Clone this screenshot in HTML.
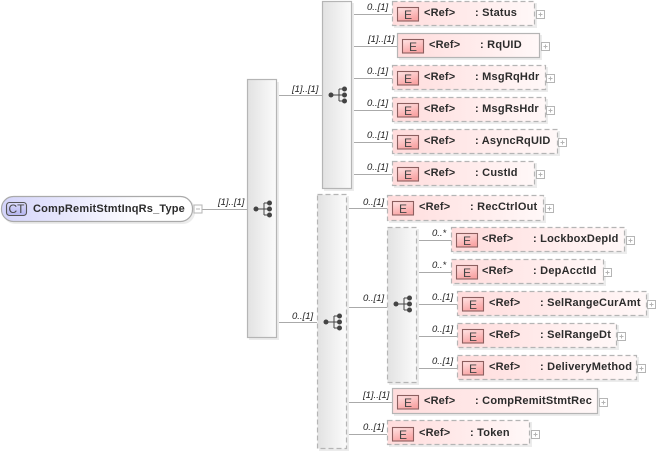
<!DOCTYPE html>
<html>
<head>
<meta charset="utf-8">
<style>
html,body{margin:0;padding:0;background:#fff;width:657px;height:455px;overflow:hidden}
svg{display:block;font-family:"Liberation Sans",sans-serif;filter:blur(.3px)}
.n{font-size:11px;font-weight:bold;fill:#2c2c2c;letter-spacing:.22px}
.r{font-size:11px;font-weight:bold;fill:#2c2c2c;letter-spacing:.15px}
.m{font-size:9.5px;font-style:italic;fill:#222}
.e{font-size:12px;fill:#444;text-anchor:middle}
.l{stroke:#aaa;stroke-width:1;fill:none}
.bs{stroke:#b5b5b5;stroke-width:1.2;fill:url(#pk)}
.bd{stroke:#b5b5b5;stroke-width:1.2;stroke-dasharray:5 3;fill:url(#pk)}
.ss{stroke:#b5b5b5;stroke-width:1.2;fill:url(#gr)}
.sd{stroke:#b5b5b5;stroke-width:1.2;stroke-dasharray:5 3;fill:url(#gr)}
.sh{fill:#ececec}
</style>
</head>
<body>
<svg width="657" height="455" viewBox="0 0 657 455" xmlns="http://www.w3.org/2000/svg">
<defs>
<linearGradient id="pk" x1="0" x2="1" y1="0" y2="0"><stop offset="0" stop-color="#ffdcdc"/><stop offset="1" stop-color="#fff8f8"/></linearGradient>
<linearGradient id="gr" x1="0" x2="1" y1="0" y2="0"><stop offset="0" stop-color="#e2e2e2"/><stop offset="1" stop-color="#fbfbfb"/></linearGradient>
<linearGradient id="ct" x1="0" x2="1" y1="0" y2="0"><stop offset="0" stop-color="#d4d4fa"/><stop offset=".75" stop-color="#ffffff"/></linearGradient>
<linearGradient id="ei" x1="0" x2=".4" y1="0" y2="1"><stop offset="0" stop-color="#ffe4e4"/><stop offset="1" stop-color="#f9a5a5"/></linearGradient>
<linearGradient id="ci" x1="0" x2="0" y1="0" y2="1"><stop offset="0" stop-color="#dcdcfb"/><stop offset="1" stop-color="#b4b4ee"/></linearGradient>
<g id="seq">
<path d="M-8 0H0M0-6V6M0-6H5M0 0H5M0 6H5" stroke="#444" stroke-width="1" fill="none"/>
<circle cx="-8" cy="0" r="2.5" fill="#444"/><circle cx="5.5" cy="-6" r="2.5" fill="#444"/><circle cx="5.5" cy="0" r="2.5" fill="#444"/><circle cx="5.5" cy="6" r="2.5" fill="#444"/>
</g>
<g id="pl"><rect x=".5" y=".5" width="8" height="8" fill="#fff" stroke="#b5b5b5"/><path d="M2.500 4.500H6.500M4.500 2.500V6.500" stroke="#b5b5b5"/></g>
<g id="ic"><rect x=".5" y=".5" width="21" height="13.500" fill="url(#ei)" stroke="#8c5f5f" stroke-width="1.1"/><text class="e" x="11" y="12">E</text></g>
</defs>

<!-- connectors -->
<path class="l" d="M202 209.5H247M277 95.5H322M277 322.5H317M352 14.5H392M352 46.5H397M352 78.5H392M352 110.5H392M352 142.5H392M352 174.5H392M347 208.5H387M347 307.5H387M347 402.5H392M347 434.5H387M417 240.5H451M417 272.5H451M417 304.5H457M417 336.5H457M417 368.5H457"/>

<!-- root -->
<rect class="sh" x="3" y="198" width="192" height="26" rx="12"/>
<rect x="1.5" y="196.5" width="191" height="25" rx="12" fill="url(#ct)" stroke="#aaa" stroke-width="1.2"/>
<rect x="6.5" y="202.5" width="20" height="13" rx="3" fill="url(#ci)" stroke="#555" stroke-width="1.1"/>
<text x="16.500" y="213" font-size="12" fill="#444" text-anchor="middle">CT</text>
<text class="n" x="33" y="212" textLength="152" lengthAdjust="spacing">CompRemitStmtInqRs_Type</text>
<g transform="translate(193.500 204.500)"><rect x=".5" y=".5" width="8" height="8" fill="#fff" stroke="#b5b5b5"/><path d="M2.500 4.500H6.500" stroke="#b5b5b5"/></g>

<!-- sequence compositors -->
<rect class="sh" x="249" y="82" width="30" height="258"/>
<rect class="ss" x="247.500" y="79.500" width="29" height="258"/>
<use href="#seq" x="264" y="209"/>
<rect class="sh" x="324" y="3" width="30" height="188"/>
<rect class="ss" x="322.500" y="1.500" width="29" height="187"/>
<use href="#seq" x="339" y="95"/>
<rect class="sh" x="319" y="196" width="30" height="255"/>
<rect class="sd" x="317.500" y="194.500" width="29" height="254"/>
<use href="#seq" x="334" y="322"/>
<rect class="sh" x="389" y="229" width="30" height="156"/>
<rect class="sd" x="387.500" y="227.500" width="29" height="155"/>
<use href="#seq" x="404" y="304"/>

<!-- elements -->
<rect class="sh" x="394" y="3" width="143" height="25"/><rect class="bd" x="392.500" y="1.500" width="142" height="24"/><use href="#ic" x="397" y="7"/><text class="r" x="424" y="16">&lt;Ref&gt;</text><text class="n" x="475" y="16">: Status</text><use href="#pl" x="536" y="10"/>
<rect class="sh" x="399" y="35" width="143" height="25"/><rect class="bs" x="397.500" y="33.500" width="142" height="24"/><use href="#ic" x="402" y="39"/><text class="r" x="429" y="48">&lt;Ref&gt;</text><text class="n" x="480" y="48">: RqUID</text><use href="#pl" x="541" y="42"/>
<rect class="sh" x="394" y="67" width="154" height="25"/><rect class="bd" x="392.500" y="65.500" width="153" height="24"/><use href="#ic" x="397" y="71"/><text class="r" x="424" y="80">&lt;Ref&gt;</text><text class="n" x="475" y="80">: MsgRqHdr</text><use href="#pl" x="546" y="74"/>
<rect class="sh" x="394" y="99" width="154" height="25"/><rect class="bd" x="392.500" y="97.500" width="153" height="24"/><use href="#ic" x="397" y="103"/><text class="r" x="424" y="112">&lt;Ref&gt;</text><text class="n" x="475" y="112">: MsgRsHdr</text><use href="#pl" x="546" y="106"/>
<rect class="sh" x="394" y="131" width="166" height="25"/><rect class="bd" x="392.500" y="129.500" width="165" height="24"/><use href="#ic" x="397" y="135"/><text class="r" x="424" y="144">&lt;Ref&gt;</text><text class="n" x="475" y="144">: AsyncRqUID</text><use href="#pl" x="558" y="138"/>
<rect class="sh" x="394" y="163" width="143" height="25"/><rect class="bd" x="392.500" y="161.500" width="142" height="24"/><use href="#ic" x="397" y="167"/><text class="r" x="424" y="176">&lt;Ref&gt;</text><text class="n" x="475" y="176">: CustId</text><use href="#pl" x="536" y="170"/>

<rect class="sh" x="389" y="197" width="157" height="26"/><rect class="bd" x="387.500" y="195.500" width="156" height="25"/><use href="#ic" x="392" y="201"/><text class="r" x="419" y="210">&lt;Ref&gt;</text><text class="n" x="470" y="210">: RecCtrlOut</text><use href="#pl" x="545" y="204"/>
<rect class="sh" x="453" y="229" width="174" height="25"/><rect class="bd" x="451.500" y="227.500" width="173" height="24"/><use href="#ic" x="456" y="233"/><text class="r" x="482" y="242">&lt;Ref&gt;</text><text class="n" x="533" y="242">: LockboxDepId</text><use href="#pl" x="626" y="236"/>
<rect class="sh" x="453" y="261" width="153" height="25"/><rect class="bd" x="451.500" y="259.500" width="152" height="24"/><use href="#ic" x="456" y="265"/><text class="r" x="482" y="274">&lt;Ref&gt;</text><text class="n" x="533" y="274">: DepAcctId</text><use href="#pl" x="603" y="268"/>
<rect class="sh" x="459" y="293" width="190" height="25"/><rect class="bd" x="457.500" y="291.500" width="189" height="24"/><use href="#ic" x="462" y="297"/><text class="r" x="489" y="306">&lt;Ref&gt;</text><text class="n" x="540" y="306">: SelRangeCurAmt</text><use href="#pl" x="647" y="300"/>
<rect class="sh" x="459" y="325" width="160" height="25"/><rect class="bd" x="457.500" y="323.500" width="159" height="24"/><use href="#ic" x="462" y="329"/><text class="r" x="489" y="338">&lt;Ref&gt;</text><text class="n" x="540" y="338">: SelRangeDt</text><use href="#pl" x="617" y="332"/>
<rect class="sh" x="459" y="357" width="180" height="25"/><rect class="bd" x="457.500" y="355.500" width="179" height="24"/><use href="#ic" x="462" y="361"/><text class="r" x="489" y="370">&lt;Ref&gt;</text><text class="n" x="540" y="370">: DeliveryMethod</text><use href="#pl" x="637" y="364"/>
<rect class="sh" x="394" y="390" width="206" height="26"/><rect class="bs" x="392.500" y="388.500" width="205" height="25"/><use href="#ic" x="397" y="395"/><text class="r" x="424" y="404">&lt;Ref&gt;</text><text class="n" x="475" y="404">: CompRemitStmtRec</text><use href="#pl" x="599" y="398"/>
<rect class="sh" x="389" y="422" width="143" height="25"/><rect class="bd" x="387.500" y="420.500" width="142" height="24"/><use href="#ic" x="392" y="427"/><text class="r" x="419" y="436">&lt;Ref&gt;</text><text class="n" x="470" y="436">: Token</text><use href="#pl" x="531" y="430"/>

<!-- multiplicities -->
<text class="m" x="218" y="205">[1]..[1]</text>
<text class="m" x="292" y="92">[1]..[1]</text>
<text class="m" x="292" y="319">0..[1]</text>
<text class="m" x="367" y="10">0..[1]</text>
<text class="m" x="368" y="42">[1]..[1]</text>
<text class="m" x="367" y="74">0..[1]</text>
<text class="m" x="367" y="106">0..[1]</text>
<text class="m" x="367" y="138">0..[1]</text>
<text class="m" x="367" y="170">0..[1]</text>
<text class="m" x="363" y="205">0..[1]</text>
<text class="m" x="363" y="301">0..[1]</text>
<text class="m" x="363" y="398">[1]..[1]</text>
<text class="m" x="363" y="430">0..[1]</text>
<text class="m" x="432" y="236">0..*</text>
<text class="m" x="432" y="268">0..*</text>
<text class="m" x="432" y="300">0..[1]</text>
<text class="m" x="432" y="332">0..[1]</text>
<text class="m" x="432" y="364">0..[1]</text>
</svg>
</body>
</html>
